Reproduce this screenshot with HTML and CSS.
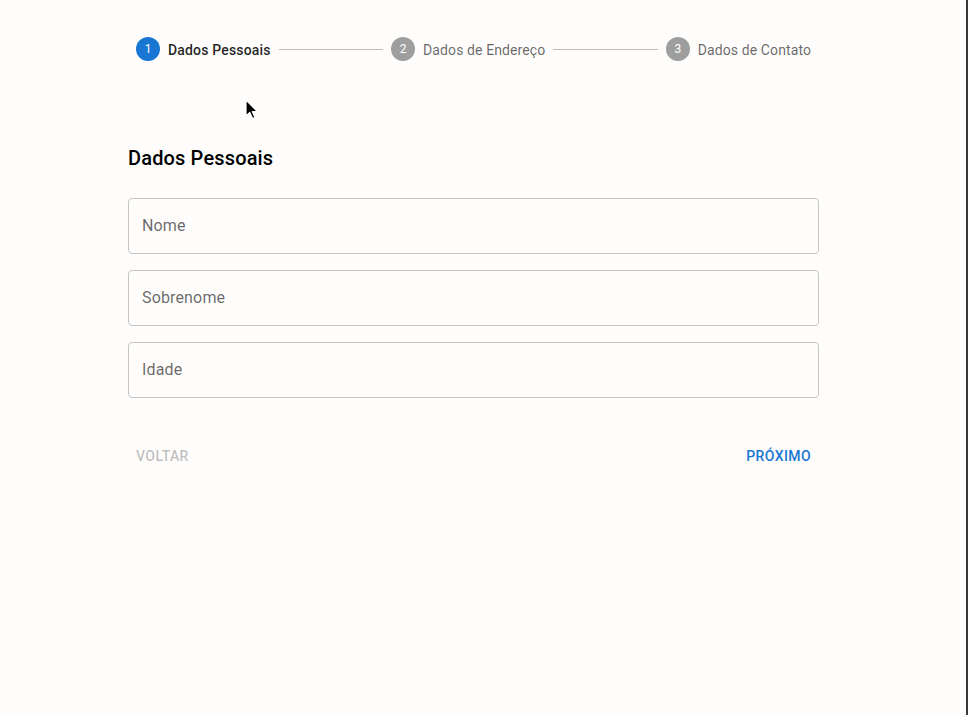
FILE: index.html
```html
<!DOCTYPE html>
<html lang="pt">
<head>
<meta charset="utf-8">
<title>Cadastro</title>
<link rel="stylesheet" href="styles.css">
</head>
<body>
<div class="page">
  <div class="form-wrap">
    <div class="stepper">
      <div class="step active">
        <span class="step-icon">1</span>
        <span class="step-label">Dados Pessoais</span>
      </div>
      <div class="connector"><span></span></div>
      <div class="step">
        <span class="step-icon">2</span>
        <span class="step-label">Dados de Endereço</span>
      </div>
      <div class="connector"><span></span></div>
      <div class="step">
        <span class="step-icon">3</span>
        <span class="step-label">Dados de Contato</span>
      </div>
    </div>

    <h2 class="title">Dados Pessoais</h2>

    <div class="fields">
      <div class="field"><span class="field-label">Nome</span></div>
      <div class="field"><span class="field-label">Sobrenome</span></div>
      <div class="field"><span class="field-label">Idade</span></div>
    </div>

    <div class="actions">
      <button class="btn btn-disabled" type="button">Voltar</button>
      <button class="btn btn-primary" type="button">Próximo</button>
    </div>
  </div>

  <svg class="cursor" width="14" height="22" viewBox="0 0 14 22">
    <path d="M1 1 L1 17 L4.8 13.4 L7.6 19.6 L10 18.6 L7.3 12.6 L12.4 12.6 Z" fill="#000" stroke="#fff" stroke-width="1.2" stroke-linejoin="round"/>
  </svg>
</div>
</body>
</html>
```

FILE: styles.css
```css
* { box-sizing: border-box; }

html, body {
  margin: 0;
  padding: 0;
  height: 100%;
}

body {
  background: #fefdfc;
  font-family: Roboto, "Liberation Sans", sans-serif;
  color: rgba(0, 0, 0, 0.87);
}

.page {
  position: relative;
  min-height: 100%;
  height: 715px;
  border-right: 2px solid #3a3a3a;
  padding-left: 128px;
  padding-top: 37px;
}

.form-wrap {
  width: 691px;
}

.stepper {
  display: flex;
  align-items: center;
  height: 24px;
}

.step {
  display: flex;
  align-items: center;
  padding: 0 8px;
}

.step-icon {
  width: 24px;
  height: 24px;
  border-radius: 50%;
  background: #9e9e9e;
  color: #fff;
  font-size: 12px;
  display: flex;
  align-items: center;
  justify-content: center;
  line-height: 1;
}

.step-label {
  padding-left: 8px;
  padding-top: 2px;
  font-size: 14px;
  color: rgba(0, 0, 0, 0.6);
  line-height: 1.43;
  letter-spacing: 0.1px;
}

.step.active .step-icon { background: #1976d2; }
.step.active .step-label { color: rgba(0, 0, 0, 0.87); font-weight: 500; letter-spacing: 0.17px; }

.connector {
  flex: 1 1 auto;
}

.connector span {
  display: block;
  border-top: 1px solid #bdbdbd;
}

.title {
  margin: 81px 0 0;
  font-size: 20px;
  font-weight: 500;
  line-height: 32px;
  letter-spacing: 0.15px;
  color: #000;
}

.fields {
  margin-top: 24px;
  display: flex;
  flex-direction: column;
  gap: 16px;
}

.field {
  height: 56px;
  border: 1px solid #c4c4c4;
  border-radius: 4px;
  display: flex;
  align-items: center;
  padding: 0 14px 1px 13px;
}

.field-label {
  font-size: 16px;
  color: rgba(0, 0, 0, 0.6);
  letter-spacing: 0.15px;
}

.actions {
  margin-top: 40px;
  display: flex;
  justify-content: space-between;
}

.btn {
  background: none;
  border: 0;
  font-family: inherit;
  font-size: 14px;
  font-weight: 500;
  letter-spacing: 0.4px;
  text-transform: uppercase;
  padding: 6px 8px;
  height: 36px;
  line-height: 24px;
  border-radius: 4px;
}

.btn-disabled { color: rgba(0, 0, 0, 0.26); }
.btn-primary { color: #1976d2; }

.cursor {
  position: absolute;
  left: 245px;
  top: 99px;
}
```
